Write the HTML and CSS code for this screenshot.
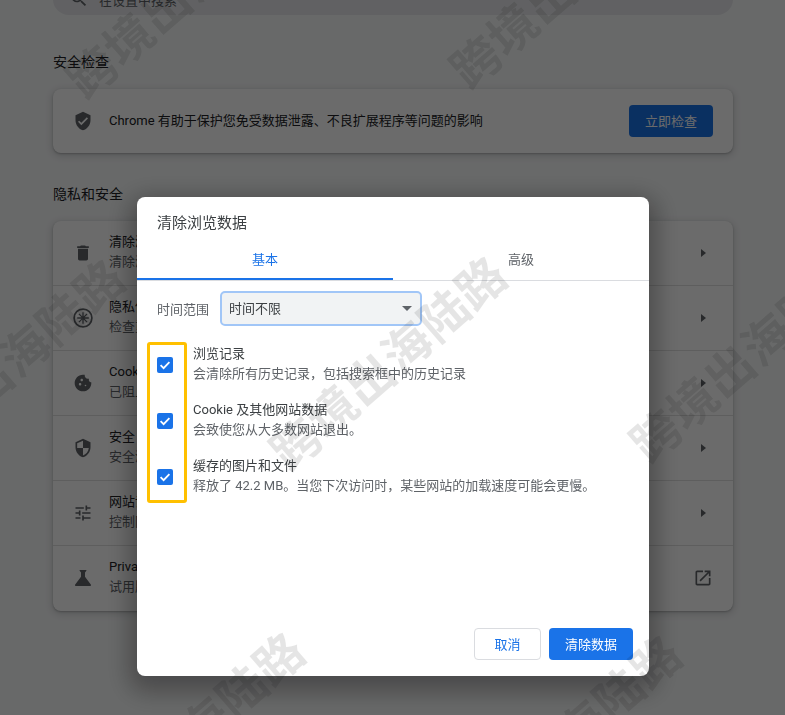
FILE: index.html
```html
<!DOCTYPE html>
<html lang="zh-CN">
<head>
  <meta charset="UTF-8">
  <meta name="viewport" content="width=device-width, initial-scale=1.0">
  <title>设置 - 隐私和安全</title>
  <link rel="stylesheet" href="styles.css">
</head>
<body>
  <div class="page">
    <div class="search">
      <svg class="search-icon" viewBox="0 0 24 24"><path d="M15.5 14h-.79l-.28-.27A6.47 6.47 0 0 0 16 9.5 6.5 6.5 0 1 0 9.5 16c1.61 0 3.09-.59 4.23-1.57l.27.28v.79l5 4.99L20.49 19l-4.99-5zm-6 0C7.01 14 5 11.99 5 9.5S7.01 5 9.5 5 14 7.01 14 9.5 11.99 14 9.5 14z"/></svg>
      <span>在设置中搜索</span>
    </div>

    <h2 class="section-title first">安全检查</h2>
    <div class="card check-card">
      <svg class="icon" viewBox="0 0 24 24"><path d="M12 1L3 5v6c0 5.55 3.84 10.74 9 12 5.16-1.26 9-6.45 9-12V5l-9-4zm-2 16l-4-4 1.41-1.41L10 14.17l6.59-6.59L18 9l-8 8z"/></svg>
      <span class="check-text">Chrome 有助于保护您免受数据泄露、不良扩展程序等问题的影响</span>
      <button class="btn btn-primary">立即检查</button>
    </div>

    <h2 class="section-title">隐私和安全</h2>
    <div class="card">
      <div class="row">
        <svg class="icon" viewBox="0 0 24 24"><path d="M6 19c0 1.1.9 2 2 2h8c1.1 0 2-.9 2-2V7H6v12zM19 4h-3.5l-1-1h-5l-1 1H5v2h14V4z"/></svg>
        <div class="row-text"><div class="row-title">清除浏览数据</div><div class="row-sub">清除浏览记录、Cookie、缓存及其他数据</div></div>
        <div class="row-end"><i class="arrow"></i></div>
      </div>
      <div class="row">
        <svg class="icon icon-line" viewBox="0 0 20 20"><circle cx="10" cy="10" r="8.9" stroke-width="1.7"/><circle cx="10" cy="10" r=".8" stroke-width="1"/><path d="M10 4.2v11.6M4.2 10h11.6M5.9 5.9l8.2 8.2M14.1 5.9l-8.2 8.2" stroke-width="1.3"/></svg>
        <div class="row-text"><div class="row-title">隐私保护指南</div><div class="row-sub">检查重要的隐私和安全控制措施</div></div>
        <div class="row-end"><i class="arrow"></i></div>
      </div>
      <div class="row">
        <svg class="icon" viewBox="0 0 24 24"><path d="M21.95 10.99c-1.79-.03-3.7-1.95-2.68-4.22-2.97 1-5.78-1.59-5.19-4.56C7.11.74 2 6.41 2 12c0 5.52 4.48 10 10 10 5.89 0 10.54-5.08 9.95-11.01zM8.5 15c-.83 0-1.5-.67-1.5-1.5S7.67 12 8.5 12s1.5.67 1.5 1.5S9.33 15 8.5 15zm2-5C9.67 10 9 9.33 9 8.5S9.67 7 10.5 7s1.5.67 1.5 1.5-.67 1.5-1.5 1.5zm4.5 6c-.55 0-1-.45-1-1s.45-1 1-1 1 .45 1 1-.45 1-1 1z"/></svg>
        <div class="row-text"><div class="row-title">Cookie 及其他网站数据</div><div class="row-sub">已阻止无痕模式下的第三方 Cookie</div></div>
        <div class="row-end"><i class="arrow"></i></div>
      </div>
      <div class="row">
        <svg class="icon" viewBox="0 0 24 24"><path d="M12 1L3 5v6c0 5.55 3.84 10.74 9 12 5.16-1.26 9-6.45 9-12V5l-9-4zm0 10.99h7c-.53 4.12-3.28 7.79-7 8.94V12H5V6.3l7-3.11v8.8z"/></svg>
        <div class="row-text"><div class="row-title">安全</div><div class="row-sub">安全浏览（保护您免受危险网站的侵害）和其他安全设置</div></div>
        <div class="row-end"><i class="arrow"></i></div>
      </div>
      <div class="row">
        <svg class="icon" viewBox="0 0 24 24"><path d="M3 17v2h6v-2H3zM3 5v2h10V5H3zm10 16v-2h8v-2h-8v-2h-2v6h2zM7 9v2H3v2h4v2h2V9H7zm14 4v-2H11v2h10zm-6-4h2V7h4V5h-4V3h-2v6z"/></svg>
        <div class="row-text"><div class="row-title">网站设置</div><div class="row-sub">控制网站可以使用和显示什么信息</div></div>
        <div class="row-end"><i class="arrow"></i></div>
      </div>
      <div class="row">
        <svg class="icon icon-flask" viewBox="0 0 24 24"><path d="M19.8 18.4L14 10.67V6.5l1.35-1.69c.26-.33.03-.81-.39-.81H9.04c-.42 0-.65.48-.39.81L10 6.5v4.17L4.2 18.4c-.49.66-.02 1.6.8 1.6h14c.82 0 1.29-.94.8-1.6z"/></svg>
        <div class="row-text"><div class="row-title">Privacy Sandbox</div><div class="row-sub">试用版功能已开启</div></div>
        <div class="row-end"><svg class="icon" viewBox="0 0 24 24"><path d="M19 19H5V5h7V3H5c-1.11 0-2 .9-2 2v14c0 1.1.89 2 2 2h14c1.1 0 2-.9 2-2v-7h-2v7zM14 3v2h3.59l-9.83 9.83 1.41 1.41L19 6.41V10h2V3h-7z"/></svg></div>
      </div>
    </div>
  </div>

  <div class="scrim">
    <div class="dialog">
      <div class="dialog-title">清除浏览数据</div>
      <div class="tabs">
        <div class="tab active">基本</div>
        <div class="tab">高级</div>
      </div>
      <div class="range">
        <span class="range-label">时间范围</span>
        <div class="select">时间不限<i class="caret"></i></div>
      </div>
      <div class="options">
        <div class="highlight"></div>
        <div class="option">
          <span class="checkbox"><svg viewBox="0 0 16 16"><path d="M3.6 8.2l3 3 5.8-6" fill="none" stroke="#fff" stroke-width="1.8"/></svg></span>
          <div><div class="option-title">浏览记录</div><div class="option-sub">会清除所有历史记录，包括搜索框中的历史记录</div></div>
        </div>
        <div class="option">
          <span class="checkbox"><svg viewBox="0 0 16 16"><path d="M3.6 8.2l3 3 5.8-6" fill="none" stroke="#fff" stroke-width="1.8"/></svg></span>
          <div><div class="option-title">Cookie 及其他网站数据</div><div class="option-sub">会致使您从大多数网站退出。</div></div>
        </div>
        <div class="option">
          <span class="checkbox"><svg viewBox="0 0 16 16"><path d="M3.6 8.2l3 3 5.8-6" fill="none" stroke="#fff" stroke-width="1.8"/></svg></span>
          <div><div class="option-title">缓存的图片和文件</div><div class="option-sub">释放了 42.2 MB。当您下次访问时，某些网站的加载速度可能会更慢。</div></div>
        </div>
      </div>
      <div class="dialog-footer">
        <button class="btn btn-outline">取消</button>
        <button class="btn btn-primary">清除数据</button>
      </div>
    </div>
  </div>

  <div class="watermarks">
    <span class="wm wm-a">跨境出海陆路</span>
    <span class="wm wm-b">跨境出海陆路</span>
    <span class="wm wm-c">跨境出海陆路</span>
    <span class="wm wm-d">跨境出海陆路</span>
    <span class="wm wm-e">跨境出海陆路</span>
    <span class="wm wm-f">跨境出海陆路</span>
    <span class="wm wm-g">跨境出海陆路</span>
  </div>
</body>
</html>
```

FILE: styles.css
```css
* {
  padding: 0;
  margin: 0;
  box-sizing: border-box;
}
html, body {
  height: 100%;
  overflow: hidden;
}
body {
  background: #f8f9fa;
  font-family: Roboto, "Noto Sans CJK SC", sans-serif;
  font-size: 13px;
  color: #202124;
}

/* settings page behind the dialog */
.page {
  width: 680px;
  margin-left: 53px;
}
.search {
  display: flex;
  align-items: center;
  gap: 10px;
  height: 32px;
  margin-top: -17px;
  padding-left: 16px;
  border-radius: 16px;
  background: #e6e8eb;
  color: #5f6368;
}
.search-icon {
  width: 20px;
  height: 20px;
  fill: #5f6368;
}
.section-title {
  margin-top: 31px;
  margin-bottom: 17px;
  font-size: 14px;
  font-weight: 400;
  line-height: 20px;
}
.section-title.first {
  margin-top: 37px;
}
.card {
  border-radius: 8px;
  background: #fff;
  box-shadow: 0 1px 2px rgba(60, 64, 67, .3), 0 2px 6px 2px rgba(60, 64, 67, .15);
}
.check-card {
  display: flex;
  align-items: center;
  height: 64px;
  padding: 0 20px;
}
.check-text {
  flex: 1;
  margin-left: 16px;
  padding-bottom: 3px;
  color: #202124;
}
.icon {
  flex: none;
  width: 20px;
  height: 20px;
  fill: #5f6368;
}
.icon-line {
  fill: none;
  stroke: #5f6368;
}
.icon-flask {
  width: 24px;
  height: 24px;
  margin: 0 -2px;
}
.row {
  display: flex;
  align-items: center;
  height: 65px;
  padding: 0 20px 1px;
  border-bottom: 1px solid #e0e0e0;
}
.row:last-child {
  border-bottom: none;
}
.row-text {
  flex: 1;
  margin-left: 16px;
  padding-bottom: 2px;
  line-height: 20px;
}
.row-sub {
  color: #5f6368;
}
.row-end {
  display: flex;
  justify-content: center;
  width: 20px;
}
.arrow {
  width: 0;
  height: 0;
  border-top: 4px solid transparent;
  border-bottom: 4px solid transparent;
  border-left: 5px solid #5f6368;
}
.btn {
  height: 32px;
  padding-bottom: 2px;
  border-radius: 4px;
  font: inherit;
  font-size: 13px;
}
.btn-primary {
  width: 84px;
  border: none;
  background: #1a73e8;
  color: #fff;
}
.btn-outline {
  width: 67px;
  border: 1px solid #dadce0;
  background: #fff;
  color: #1a73e8;
}

/* dialog */
.scrim {
  position: fixed;
  top: 0;
  right: 0;
  bottom: 0;
  left: 0;
  display: flex;
  justify-content: center;
  align-items: flex-start;
  padding: 197px 0 0 1px;
  background: rgba(0, 0, 0, .58);
}
.dialog {
  display: flex;
  flex-direction: column;
  width: 512px;
  height: 479px;
  border-radius: 8px;
  background: #fff;
  box-shadow: 0 8px 24px 8px rgba(0, 0, 0, .3);
}
.dialog-title {
  padding: 16px 20px 0;
  font-size: 15px;
  line-height: 20px;
  color: #3c4043;
}
.tabs {
  display: flex;
  height: 48px;
  border-bottom: 1px solid #dadce0;
}
.tab {
  flex: 1;
  height: 47px;
  padding-top: 5px;
  line-height: 44px;
  text-align: center;
  color: #5f6368;
}
.tab.active {
  border-bottom: 2px solid #1a73e8;
  color: #1a73e8;
}
.range {
  display: flex;
  align-items: center;
  gap: 11px;
  margin-top: 10px;
  padding: 0 20px;
}
.range-label {
  padding-bottom: 1px;
  color: #5f6368;
}
.select {
  display: flex;
  align-items: center;
  justify-content: space-between;
  width: 202px;
  height: 35px;
  padding: 0 8px 3px 7px;
  border: 2px solid #a1c6f7;
  border-radius: 5px;
  background: #f1f3f4;
  color: #3c4043;
}
.caret {
  width: 0;
  height: 0;
  margin-top: 3px;
  border-left: 5px solid transparent;
  border-right: 5px solid transparent;
  border-top: 5px solid #5f6368;
}
.options {
  position: relative;
  display: flex;
  flex-direction: column;
  gap: 16px;
  margin-top: 18px;
  padding: 0 20px;
}
.highlight {
  position: absolute;
  top: -2px;
  left: 10px;
  width: 40px;
  height: 161px;
  border: 3px solid #ffc000;
  border-radius: 3px;
}
.option {
  display: flex;
  align-items: center;
  gap: 20px;
  line-height: 20px;
}
.checkbox {
  flex: none;
  width: 16px;
  height: 16px;
  margin-top: 2px;
  border-radius: 2px;
  background: #1a73e8;
}
.checkbox svg {
  display: block;
  width: 16px;
  height: 16px;
}
.option-title {
  color: #3c4043;
}
.option-sub {
  color: #5f6368;
}
.dialog-footer {
  display: flex;
  justify-content: flex-end;
  gap: 8px;
  margin-top: auto;
  padding: 0 16px 16px;
}

/* watermark stamped over the whole screenshot */
.watermarks {
  position: fixed;
  top: 0;
  right: 0;
  bottom: 0;
  left: 0;
  overflow: hidden;
  pointer-events: none;
}
.wm {
  position: absolute;
  font-size: 48px;
  font-weight: 700;
  line-height: 48px;
  letter-spacing: 1px;
  white-space: nowrap;
  color: rgba(0, 0, 0, .1);
  transform-origin: 24px 24px;
  transform: rotate(-41deg);
}
.wm-a { left: 273px; top: 421px; }
.wm-b { left: 633px; top: 413px; }
.wm-c { left: 69px; top: 49px; }
.wm-d { left: 453px; top: 39px; }
.wm-e { left: -109px; top: 424px; }
.wm-f { left: 71px; top: 797px; }
.wm-g { left: 448px; top: 800px; }
```
